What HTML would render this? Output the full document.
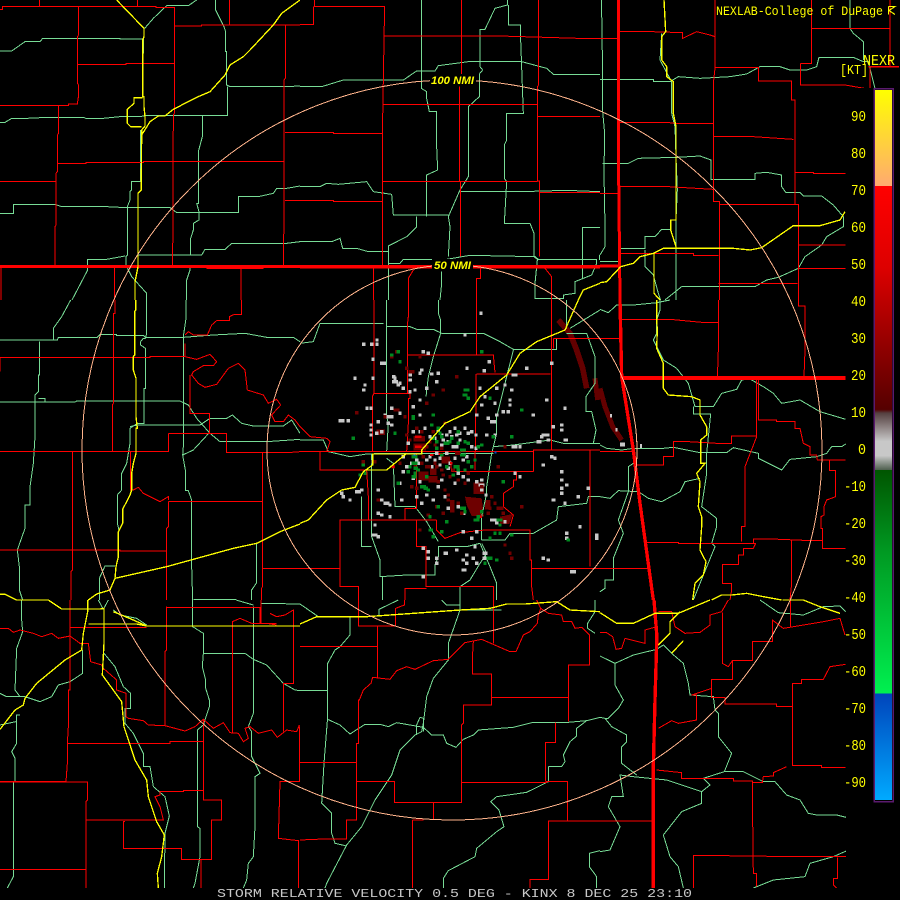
<!DOCTYPE html>
<html><head><meta charset="utf-8"><title>Storm Relative Velocity KINX</title>
<style>
html,body{margin:0;padding:0;background:#000;width:900px;height:900px;overflow:hidden}
svg{display:block}
.r{fill:none;stroke:#f00;stroke-width:3}
.g{fill:none;stroke:#78dc96;stroke-width:3}
.y{fill:none;stroke:#ff0;stroke-width:4}
.t{font-family:"Liberation Mono",monospace}
</style></head><body>
<svg xmlns="http://www.w3.org/2000/svg" width="900" height="900" viewBox="0 0 900 900" shape-rendering="crispEdges">
<defs>
<clipPath id="c"><rect x="0" y="0" width="846" height="888"/><rect x="846" y="0" width="54" height="88"/></clipPath>
<linearGradient id="b" x1="0" y1="0" x2="0" y2="1">
<stop offset="0" stop-color="#ffff00"/><stop offset=".135" stop-color="#ffaa70"/><stop offset=".135" stop-color="#ff0000"/>
<stop offset=".25" stop-color="#dd0000"/><stop offset=".35" stop-color="#990000"/><stop offset=".45" stop-color="#550000"/>
<stop offset=".455" stop-color="#554040"/><stop offset=".495" stop-color="#c8c8c8"/><stop offset=".515" stop-color="#c8c8c8"/><stop offset=".535" stop-color="#506050"/>
<stop offset=".535" stop-color="#005500"/><stop offset=".65" stop-color="#009922"/><stop offset=".85" stop-color="#00f050"/>
<stop offset=".85" stop-color="#0044bb"/><stop offset="1" stop-color="#00aaff"/>
</linearGradient>
</defs>
<rect width="900" height="900" fill="#000"/>
<g clip-path="url(#c)">
<!-- radar streak -->
<g transform="translate(300,300) scale(.33333)">
<path d="M775,60L810,100L830,150L848,205L860,265" fill="none" stroke="#640000" stroke-width="17"/>
<path d="M885,235L893,300" fill="none" stroke="#640000" stroke-width="15"/>
<path d="M495,590L545,595L552,650L515,648L500,615ZM450,600H464V638H450ZM520,548H552V582H520ZM385,528H412V548H385ZM355,515H385V542H355ZM340,408H375V425H340ZM340,430H378V452H340ZM230,388H255V405H230ZM600,650L638,642L628,672H600ZM555,600H572V628H555ZM425,470H450V490H425ZM390,505H410V525H390Z" fill="#6e0000"/>
</g>
<g transform="translate(600,300) scale(.33333)">
<path d="M0,265L15,320L38,380L65,420" fill="none" stroke="#640000" stroke-width="15"/>
<path d="M60,428h15v12h-15z" fill="#c8c8c8"/><path d="M120,432h6v12h-6zM30,342h6v10h-6zM47,384h6v10h-6z" fill="#c8c8c8"/>
</g>
<!-- top-left -->
<g transform="scale(.33333)">
<path class="g" d="M434,85L460,55L500,17H565L590,0M0,153H35L75,125H120L128,115H360V117H430V160M647,0V30L672,80L677,95V155H680V255L690,260H853L900,258M683,260V346H440L420,350H360L300,356H260L250,352H145L80,355H35L15,367H0M607,346V410L595,455V610H590L597,635V660L580,670V690L572,715V765H415M572,765H605L615,748H675L695,730H860L900,725M422,390V545H395V570L390,575V600L382,620V765L378,770V795L395,830L440,880V900M0,640H40V613H165L185,620H320L380,623H510L530,638H715V590H775L820,580L830,565H860L900,558M216,900L263,810V778H320L375,768M570,795V810L560,840V900"/>
<path class="r" d="M0,28H8V20H468V22H523V340L520,345L518,795M118,0V20M412,0V20M688,0V75M523,78H605V75H900M236,20V105L232,110V250L236,255V285L232,312H205V316H0M232,193H378V190H523M176,316V400L172,405V515L168,520V675L165,680V795M0,545H168M174,490H258V487H430V484H853M856,75V235L852,240V700L850,705V795M855,397H900M855,601H900M343,800V900M723,805V900M3,800V900"/>
<path d="M0,800H900" fill="none" stroke="#f00" stroke-width="9"/><path d="M620,803H790" fill="none" stroke="#f00" stroke-width="9"/>
<path class="y" d="M350,0L432,85V110L428,120V290L432,290V320L435,350V378L425,390V400L424,545V570L414,580V800L405,845V880L405,900M428,293H402V310L382,328V370L392,380H425M900,0L845,40L820,75L750,150L730,170L690,195L675,225L630,275L590,292L520,328L495,348H475L450,365L425,405"/>
</g>
<!-- left-mid -->
<g transform="translate(0,300) scale(.33333)">
<path class="g" d="M212,0L185,50L160,85V120H0M160,120H172L175,113H290L300,103H350V106H430L436,112H550L640,105L735,100L800,112H880L900,125M440,0V100L436,115H430L422,125V135L436,145V265H432V370H412L390,385V430L380,490L365,520V570L352,585V670L358,695M118,125V225H115V275L105,285V410L100,490L90,560V615H75V685L52,750L58,800V870L68,900M115,295H135V306M0,306H225L230,303H540L565,315L590,355L630,400L660,425H800L900,418M558,0V55L550,110V440L548,465L580,450L628,398M548,465L556,510V572H565L575,600V800L578,900M390,380L412,375H600L630,355H680L697,345L725,370L760,378H850L875,360L900,400M580,898H708M770,730V848L755,870V900M298,900V835L315,798H345"/>
<path class="r" d="M725,0V43H703L688,50V62H650L635,75L622,105H580L565,95L555,105M345,0V40H340V310L337,315V455M0,215V172H450V170H555V130M555,170L590,178L630,163L650,185L640,197H610L580,215L575,225L595,250L615,262L650,253L685,205L715,190L735,210L742,270L790,285L805,310L830,298L842,315L815,345L825,365L850,365L865,345L885,360L900,380M570,225V340H628V400M505,400H680V458H862L900,455M0,455H505V400M217,455V810L213,815V900M392,455V570H400L415,562L430,580L480,605L505,590V600M505,605H787M787,458V860L785,865V900M505,605V680L500,685V900M0,750H360V753H500M787,805H900"/>
<path class="y" d="M407,0V30L404,35V165L400,170V210L408,235V350L412,385H408V460L400,490L395,520V570L390,585L368,628V670L355,695V770L348,800L345,835L500,800L700,745L770,730L840,695L900,672M345,835L330,870L290,882L265,900M0,883H15L50,900"/>
</g>
<!-- bottom-left -->
<g transform="translate(0,600) scale(.33333)">
<path class="g" d="M65,0V60L68,95L50,145L45,270L60,290H75M0,280L20,290H75L120,305L155,290L175,255L210,245L248,220V150M60,345H50V430L35,455L45,475V545H40V830L22,864M0,375L48,365M312,160L345,200L370,260L392,280V325H375V370L400,400L430,460V500H450L460,560L495,590L508,648L495,700L493,864M578,0V80L610,100V160L607,200L617,240V265L628,300V320L610,375L592,390V680L600,685V770L585,850L580,864M612,160H735L760,178L800,195L850,250L885,270L900,272M760,20V340L745,380L755,395V470L780,520L765,530V680L760,770L745,790L740,840L730,864M295,0L310,28M325,0L310,28M340,30L360,45L410,55L440,75M708,0L760,15M785,10L900,12"/>
<path class="r" d="M0,85H25L40,97L60,90L100,100L125,110L155,100L175,115L210,108L240,130H265L272,185L305,195L310,205L350,240V270L378,280V350L385,355L430,362L445,375L495,377L555,393L585,380L610,358L640,385L670,368L690,398L715,400L730,425L745,415L735,385L750,380L775,400L815,390L832,412L860,390L890,395L898,375M210,0V270H205V380L202,430V490L198,545H0M0,546H262V600L258,605V864M203,430H510V425H610M500,22H780V70H830M500,20V150L495,155V377M697,65V400M697,65L720,55L755,70H800L830,75M783,0V70M810,40L830,50L855,45L880,30V28M880,28V250H850V395M898,380V545H840L835,715L895,722V864M610,358V600H665V660H635V778H545V745H370V665H375M260,660H490L480,620L465,590L480,585V575H550V572H610M0,808H258M603,778V864M212,82H440"/>
<path class="y" d="M50,0H145L185,27H300L312,25V130L307,225L365,305L372,380L405,480L440,540L445,590L470,665L493,705L485,770L472,820L475,864M263,0V35L250,100L245,150L195,180L110,250L75,295L70,315L45,330L0,388M265,72H410L440,78H900M340,35L400,60L440,78"/>
</g>
<!-- bottom-mid -->
<g transform="translate(300,600) scale(.33333)">
<path class="g" d="M480,0V30L445,130V180L400,235L380,290L370,370L365,395L345,405L300,450L275,525L225,600L185,680L140,735L80,850L75,864M150,50V105L120,140L105,150L83,190V350L72,490L65,610L95,640V700L105,730L140,738M0,272H83M83,358L120,375L150,402L195,373H240L265,380L290,368L370,382L395,405H430L440,430L468,442L490,418L520,405L535,390L640,382L700,367H805L860,362L900,352M360,352L350,375V405M360,352L370,355V395M745,500V545L680,577L590,590L572,605L597,630L612,680L590,695L530,745L525,770L445,812L430,835V864M745,500H785L795,485L790,465L810,425L830,408V385L860,362M890,864V830L868,800V760L900,752M425,0L440,15H480M885,0V35L863,70V85L885,100M237,45V28L295,0M0,12L55,50H150M480,30H605"/>
<path class="r" d="M175,0V78H287V25L313,15V0M233,78V232M0,140H233M218,232L213,250L190,270L178,300H175V430H170V660H140V717H70L0,720M218,232L270,238L290,212L320,200L345,208L400,182L445,178L495,128L545,118L630,155L648,155L670,105L690,95L712,70L715,45L722,25L710,0M722,25L745,40L785,45L790,65L815,65L825,85L845,82L868,105V195H805V365M0,488H170M170,545H283V607H485V375L490,370V315H575V222H517V175L520,125M575,292H805M580,0V130M485,547H740V545H802V663H745V838H690V864M737,545V428H767V367M802,663H900M400,607V660M338,660V864M338,660H370"/>
<path class="y" d="M0,72L50,50H200L340,40L480,30L570,25L620,12H675L770,5L810,30L900,35"/>
</g>
<!-- bottom-right -->
<g transform="translate(600,600) scale(.33333)">
<path class="g" d="M0,168L45,190L100,165L170,148L190,135L215,160L250,190L265,250L270,285L340,290L345,330L355,340V410L395,460L373,515L310,535L330,555L305,575V610L245,635L190,705L210,770L235,800L250,864M305,575L200,540L100,530L60,525L70,590H35L25,620L60,680L30,750L0,755M375,515H430L490,545H525L560,585L600,600L625,640L650,645H710L750,655L900,665M45,190V255L70,300L55,325L25,355L15,355L0,352M15,355L35,380L80,405V425L65,440V490L110,525M460,864L520,840L615,830L630,790L700,770L780,735L815,712H870L897,690M480,0L535,38L610,45L670,20L720,18L737,35"/>
<path class="r" d="M0,98H20L38,110L48,148L65,145L75,115L135,130L135,90L170,80M175,35H215L225,80L255,100L300,97L330,75V45L365,35L385,0M367,38V190L385,200L397,182H458V125H517V60L550,85L670,65L720,55L735,105M572,0V80M397,182V238H335V292H375V312H530V320H577V497H665V502H737M577,320V250H605V238H670L690,200L737,193M335,238V265L275,285H290V360L235,370L215,362L175,385M170,510L245,518V535H400V543H458V660L460,820H470V860M458,547H487L490,530L520,528V518L560,500M0,663H160M280,864V767H370L590,770H780V815H870V835H897M712,772V835H700V855L710,864M750,605V772M750,737H860V742H897"/>
<path d="M162,0L170,100V130L165,300L160,500V864" fill="none" stroke="#f00" stroke-width="10"/>
<path class="y" d="M0,38L50,70H100L165,40H235L330,0M210,100V65L240,35M175,135L210,100M215,160L250,122M548,0H610L660,20L720,40"/>
</g>
<!-- right-mid -->
<g transform="translate(600,300) scale(.33333)">
<path class="g" d="M0,435L20,445L65,450L100,445L190,445L220,442L300,458H380L400,443L475,460V475L545,510L570,478L650,470L680,460L695,440H725L737,432M0,28L25,38L50,15L100,15L170,8L210,0M180,0V30L170,60V100L160,120L190,180L230,205L265,250L285,320H340L365,280L410,268L425,240L450,237L490,260L520,280L545,310L600,300L660,335L737,358M280,320V342H332L320,460V520L305,620L350,655V680L335,730L345,740L300,850L280,900M0,590L30,595L55,572L115,575L145,595L185,605L240,575L255,545L300,535M100,490L85,500V575L55,660L70,700L40,775V840H15V865L0,875"/>
<path class="r" d="M65,58H210L305,67H355V0M355,67V150L352,238M0,115H60M595,0V18H615V150L612,230M0,455H100M100,495H190V470H220V425H265L350,430H395V408H470V240M475,240V360H530V365H585V385H600L610,430L630,440V465H650L652,480H737M470,410L435,500V680H425V725M140,727H235V730H460V717H515L635,722H668V745H737M688,482V512H707V590L680,600L672,620V645L663,650V685H668V722M575,722V850L570,900M460,730H467L460,745H430V765H415V793H367V850H395V870L390,900M0,805H145"/>
<path d="M60,0L65,230L100,450L120,610L160,900" fill="none" stroke="#f00" stroke-width="10"/>
<path d="M65,234H737" fill="none" stroke="#f00" stroke-width="11"/>
<path class="y" d="M170,0V60L172,90L170,145L190,190V265L205,285L275,290L300,300V345L320,380V405L302,420V490H315L290,520L300,545L295,620L305,650V680L300,750L318,785L310,825L285,850L278,900M335,900L365,885H395L440,880L490,890L545,900"/>
</g>
<!-- top-right -->
<g transform="translate(600,0) scale(.33333)">
<path class="g" d="M5,0V35L8,230V335L14,400V435L12,490V520L15,680V740L0,765M0,785H55M0,238H160V245H210L235,230L300,235L390,230L440,222L480,200H540L570,210H620L650,200L657,172H760L790,185H805L825,265M8,490H85L115,475L230,472L300,468L333,480V538H465V520L500,517L545,525V560L558,578H600L610,588H665L700,615L730,650V680L680,710L665,735L615,770L595,805L535,832L500,840L465,860H245L195,900M750,0V85L760,100L790,125V180M185,100L180,180L215,245V340L225,380L228,470L232,570L228,660M60,745H135V710H165L185,688H215M135,750V800L160,825L175,880L182,900M228,660V900"/>
<path class="r" d="M0,115H55M60,95H155L248,98V115L290,95L330,105L345,110V0M345,110V205L340,250V605H358V900M345,202H475V243H575V300H585V613H358M602,190H635V85H870V0M635,85V0M870,85V200M602,190V255H735L810,268V205M60,367H200L225,370H340M0,580H55M60,560H205L340,568M340,410H460L580,418M585,518H640V520H737M595,735H737M595,805H737M585,613H595V900M355,850H592M60,760H280V767H355"/>
<path d="M55,0V440L60,900" fill="none" stroke="#f00" stroke-width="9"/>
<path d="M0,798H55" fill="none" stroke="#f00" stroke-width="9"/>
<path d="M805,200H897" fill="none" stroke="#f00" stroke-width="4"/>
<path class="y" d="M192,0L197,95L185,110V180L200,200V230L220,245V340L228,380V660H212V690L228,740V745M62,800L100,790L120,770L160,760L190,745H400L450,750L485,743L580,677H660L720,660L735,635M0,848L20,845L62,800M162,760V880L180,900"/>
</g>
<!-- top-mid -->
<g transform="translate(300,0) scale(.33333)">
<path class="g" d="M0,260H65L130,240H310L350,213H405L415,197L505,185H665L740,205L760,223H900M364,0V265L380,275V295L388,335H410V440L413,510L380,525V650M622,0V15L585,25L555,88H540V200L548,210L538,222V290L505,320V530L480,570L445,650L450,680L445,770M625,15V75H662V120L670,340H620V420L613,435V535L620,545L613,670H690L702,700V770L715,780M0,560H60L80,550L115,553L200,545L220,575L275,583L280,645H445M480,575H660L800,571L900,575M350,650V680L320,710L265,738V900M0,725H95L120,715L128,745H170L205,755H265M265,790H300L310,778H440L510,766L705,770L715,778H890V790L875,825L825,845V880L790,885V895H705V850L712,780M848,835V682H900M898,765V780M425,815V850L420,900"/>
<path class="r" d="M44,0V20H253V65L248,355H247V795M0,73H40V20M253,108H600L835,115H900M485,0V225M478,260V545M482,545V770M716,0V255L712,260V543H718V770M250,313H712M712,350H900M0,397H100V400H247M0,601H100V604H247M247,545H712M718,578H900M220,805V900M340,810L325,835V900M542,805V835H530V900M735,805L755,830V900"/>
<path d="M0,800H900" fill="none" stroke="#f00" stroke-width="10"/>
<path class="y" d="M835,900L850,870L900,850"/>
</g>
<!-- center -->
<g transform="translate(300,300) scale(.33333)">
<path class="g" d="M260,0V350L265,370L260,455M260,80H330L350,88H400L425,100H550L600,125L640,148H770V115M415,0V40L422,60V100L400,170L385,230L378,290M800,0V85M810,85L900,30M800,100H860L885,170V250L858,290V335H875L888,390L880,430M640,150L620,230L590,350V400L575,460L560,560V580L545,650V720M545,720H615L630,700H700L770,660L775,620L860,610L865,590H900M0,420H70L85,455L150,470L200,462L260,460H580M580,440L640,435L750,420L790,430H900M215,462V710L240,780V830L320,825H405V795L415,770V740H500L540,730L570,800L590,850V900M260,475L280,490L285,620H345L380,665L415,725M185,590V740H215M545,730L560,760L540,790L510,840L480,860V900M248,830V900M0,130L40,125L60,70H250"/>
<path class="r" d="M222,0V280L217,290V455M325,0V50L322,75V280H330V295H325V370L320,455M222,280H330M322,165H530V0M530,165H580L585,218M530,222H752M755,0V450H900M528,222V300L525,510M0,380L30,410L80,415L90,425L80,455H60V510H200L205,590V660M0,454H700M700,514V450H870M870,450V800M455,514H700M650,514V540H640V560L610,580V620L640,645L630,680M450,480L455,514M350,460V625H315V660H120V860H175V900M120,660H410M410,660V690L435,715L480,698L555,690H690V780H695V860L700,900M350,660V740H378V860H580V900M315,900V865H380M695,805H900M0,805H120M760,115H900M760,115V145"/>
<!-- grey cells -->
<path fill="none" stroke="#c8c8c8" stroke-width="10" d="M210,133h10M226,120h10M226,133h10M186,133h10M214,178h10M240,190h18M160,235h10M190,255h10M186,270h10M214,235h10M208,325h10M196,325h10M115,362h18M140,362h10M208,375h10M208,390h10M208,405h10M230,365h10M250,345h10M260,350h10M270,325h10M270,350h10M260,370h10M240,395h10M276,230h10M276,245h18M295,250h10M305,265h10M326,240h10M326,225h10M355,220h10M360,210h10M390,222h10M365,155h10M380,160h10M410,220h10M405,245h10M375,265h10M355,300h10M335,320h10M340,270h10M325,275h10M295,340h10M270,375h10M355,345h10M335,395h10M410,390h10M420,405h10M435,405h10M450,410h10M465,405h10M475,400h10M425,420h10M440,425h10M420,435h10M455,440h10M475,420h10M465,440h10M490,425h10M500,400h10M435,460h10M405,460h10M415,475h10M460,475h10M485,480h10M495,470h10M510,440h10M496,205h10M548,212h10M563,185h10M538,40h10M490,105h10M535,265h10M550,290h10M540,315h10M525,345h10M560,355h10M570,365h18M585,345h10M605,335h10M620,335h10M585,265h10M610,255h10M635,225h18M625,300h10M630,270h10M625,315h10M580,310h10M675,205h10M695,345h10M735,300h10M790,325h10M750,190h10M755,380h10M780,375h10M780,390h10M790,420h14M725,405h24M740,420h10M720,410h10M710,425h14M635,440h18M655,440h10M580,405h10M555,405h10M523,405h10M523,445h10M750,470h10M725,495h10M760,475h10M655,530h10M640,520h10M780,515h10M780,540h10M795,555h10M780,565h10M780,580h10M755,600h12M790,610h10M830,590h10M860,565h10M795,700h10M795,715h10M835,680h10M885,705h10M885,715h10M725,775h10M740,780h10M810,815h18M165,575h18M180,570h10M125,590h10M145,600h10M120,580h10M230,570h10M240,600h10M250,610h18M265,615h10M230,640h10M240,645h10M265,650h10M300,600h10M295,550h10M220,675h10M215,705h18M230,710h10M365,745h10M380,755h10M380,775h10M405,775h10M405,790h10M430,760h14M465,750h10M520,740h10M495,765h10M485,780h10M495,790h10M485,810h14M515,775h10M548,760h14M548,775h14M525,790h10M365,830h10M485,695h10M510,715h10M525,695h10M570,660h36M585,668h10M610,665h10M535,555h18M540,570h10M525,545h10M335,535h10M355,545h10M305,515h10M315,500h10M305,470h10M350,490h10M390,500h10M420,540h10M430,590h10M440,625h10M470,620h10M486,640h10M225,400h10M540,540h10M553,585h10M280,235h10M290,255h10M375,480h10M385,470h10M400,480h10M415,495h10M445,490h10M470,520h10M485,530h10M500,540h10M345,480h10M330,490h10M320,430h10M355,395h10M370,385h10M385,410h10M400,415h10M445,395h10M460,385h10M490,385h10M510,395h10M440,505h10M460,550h10M410,560h10M375,585h10M395,600h10M360,610h10M345,590h10"/>
<!-- dark red cells -->
<path fill="none" stroke="#6e0000" stroke-width="10" d="M270,170h10M285,155h10M315,205h10M325,215h18M355,170h10M395,285h10M375,310h10M425,270h10M465,230h10M250,350h10M280,330h18M310,350h10M315,405h10M325,420h10M395,395h10M430,370h10M420,445h10M365,470h10M405,500h10M425,525h10M445,530h10M470,500h10M500,520h10M405,620h10M425,640h10M440,600h10M470,610h10M480,640h10M520,570h10M590,625h18M605,640h10M660,620h10M610,735h10M625,760h10M630,775h10M380,645h10M355,690h10M165,338h10M330,560h10M345,565h10M295,490h10M215,485h14M185,485h10M465,460h18M440,480h10M590,500h10M610,440h10M275,500h10M230,600h10M510,630h10M600,625h10M360,490h10M375,500h18M400,490h10M420,510h10M455,510h10M340,500h10M375,440h10M385,425h10M400,435h10M360,395h10M345,385h10M470,540h10M490,550h10M410,545h10M430,570h10M440,585h10M570,590h10M580,610h10M560,640h10M540,560h10M565,625h10"/>
<!-- bright red -->
<path fill="none" stroke="#e60000" stroke-width="7" d="M345,410h20M345,440h20M390,465h10M415,462h14M275,500h8M450,490h8M530,650h16"/>
<!-- green cells -->
<path fill="none" stroke="#008a20" stroke-width="10" d="M295,185h10M270,165h10M290,155h10M490,270h18M488,285h14M500,295h10M540,155h10M565,295h10M335,355h10M335,350h10M395,345h10M410,385h10M395,415h10M405,425h10M420,410h10M430,430h18M445,425h10M480,450h18M480,465h18M490,425h10M470,430h10M540,435h10M530,440h10M420,465h10M405,445h10M335,470h18M335,490h18M340,505h14M320,515h10M335,530h14M340,520h10M360,560h18M370,565h14M380,570h10M460,500h18M470,510h10M435,500h10M490,510h10M510,500h10M280,400h10M185,495h10M175,525h10M190,520h10M155,415h10M520,660h18M530,650h10M590,660h18M595,675h10M385,690h14M395,710h10M420,695h10M435,665h10M565,715h10M580,700h10M595,700h10M630,705h10M560,775h18M550,790h10M585,780h10M660,330h10M630,410h10M575,410h10M605,545h10M800,720h10M385,650h10M540,635h10M480,625h18M490,635h10M410,620h10M450,415h10M500,430h10M290,550h10M350,510h10M325,500h10M375,530h10M455,525h10M500,485h10M520,480h10M390,375h10M415,400h10M470,395h10"/>
<path fill="none" stroke="#0050c8" stroke-width="6" d="M340,465h6M583,458h6"/>
<path class="y" d="M0,670L25,660L80,600L125,570L165,562L190,515L218,495V462H365V450L435,370L510,335L540,290L620,225L660,160L710,125L795,90L835,0M200,510H260L320,460"/>
</g>
<!-- range rings -->
<circle cx="452" cy="450" r="370" fill="none" stroke="#ffb48c" stroke-width="1"/>
<circle cx="452" cy="450" r="185" fill="none" stroke="#ffb48c" stroke-width="1"/>
</g>
<!-- ring labels -->
<rect x="430" y="74" width="46" height="12" fill="#000"/>
<rect x="432" y="259" width="41" height="12" fill="#000"/>
<text x="431" y="84" shape-rendering="auto" font-size="11" font-weight="bold" font-style="italic" fill="#ff0" textLength="43" lengthAdjust="spacingAndGlyphs" style="font-family:'Liberation Sans',sans-serif">100 NMI</text>
<text x="434" y="269" shape-rendering="auto" font-size="11" font-weight="bold" font-style="italic" fill="#ff0" textLength="37" lengthAdjust="spacingAndGlyphs" style="font-family:'Liberation Sans',sans-serif">50 NMI</text>
<!-- top text -->
<text x="716" y="15" class="t" font-size="13" fill="#ff0" textLength="167" lengthAdjust="spacingAndGlyphs">NEXLAB-College of DuPage</text>
<path d="M888.5,6.5V14.5M888.5,6.5H895L889,10.5L895,14.5" fill="none" stroke="#ff0" stroke-width="1"/>
<text x="863" y="65" class="t" font-size="15" fill="#ff0" textLength="32" lengthAdjust="spacingAndGlyphs">NEXR</text>
<text x="840" y="74" class="t" font-size="14" fill="#ff0" textLength="28" lengthAdjust="spacingAndGlyphs">[KT]</text>
<!-- colour bar -->
<rect x="874" y="88.5" width="19" height="713" fill="none" stroke="#5a1a6e" stroke-width="1.5"/>
<rect x="875" y="90" width="17" height="710" fill="url(#b)"/>
<!-- scale labels -->
<g class="t" font-size="15" fill="#ff0" text-anchor="end">
<text x="866" y="121" textLength="15" lengthAdjust="spacingAndGlyphs">90</text><text x="866" y="158" textLength="15" lengthAdjust="spacingAndGlyphs">80</text><text x="866" y="195" textLength="15" lengthAdjust="spacingAndGlyphs">70</text><text x="866" y="232" textLength="15" lengthAdjust="spacingAndGlyphs">60</text><text x="866" y="269" textLength="15" lengthAdjust="spacingAndGlyphs">50</text><text x="866" y="306" textLength="15" lengthAdjust="spacingAndGlyphs">40</text><text x="866" y="343" textLength="15" lengthAdjust="spacingAndGlyphs">30</text><text x="866" y="380" textLength="15" lengthAdjust="spacingAndGlyphs">20</text><text x="866" y="417" textLength="15" lengthAdjust="spacingAndGlyphs">10</text><text x="866" y="454" textLength="8" lengthAdjust="spacingAndGlyphs">0</text><text x="866" y="491" textLength="22" lengthAdjust="spacingAndGlyphs">-10</text><text x="866" y="528" textLength="22" lengthAdjust="spacingAndGlyphs">-20</text><text x="866" y="565" textLength="22" lengthAdjust="spacingAndGlyphs">-30</text><text x="866" y="602" textLength="22" lengthAdjust="spacingAndGlyphs">-40</text><text x="866" y="639" textLength="22" lengthAdjust="spacingAndGlyphs">-50</text><text x="866" y="676" textLength="22" lengthAdjust="spacingAndGlyphs">-60</text><text x="866" y="713" textLength="22" lengthAdjust="spacingAndGlyphs">-70</text><text x="866" y="750" textLength="22" lengthAdjust="spacingAndGlyphs">-80</text><text x="866" y="787" textLength="22" lengthAdjust="spacingAndGlyphs">-90</text>
</g>
<!-- bottom title -->
<text x="217" y="897" class="t" font-size="12" fill="#c8c8c8" textLength="475" lengthAdjust="spacingAndGlyphs">STORM RELATIVE VELOCITY 0.5 DEG - KINX 8 DEC 25 23:10</text>
</svg>
</body></html>
